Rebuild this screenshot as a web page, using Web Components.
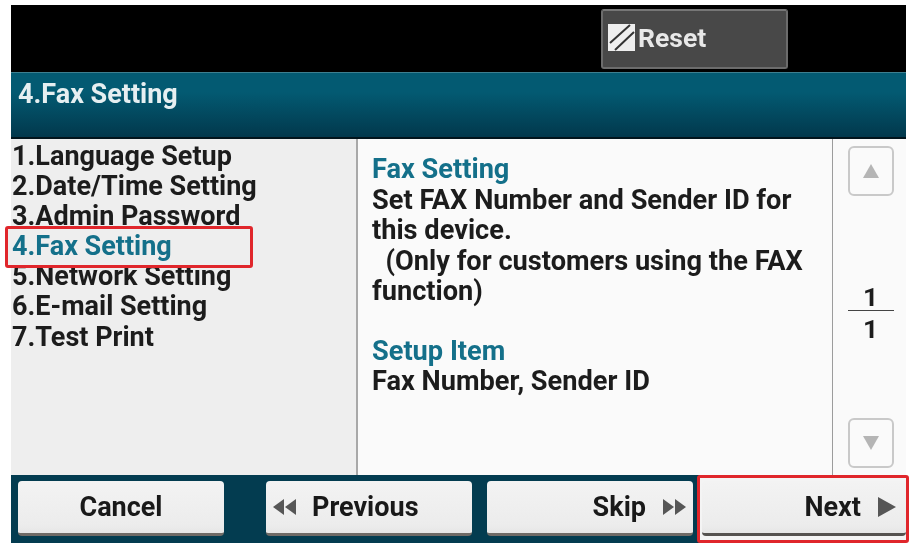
<!DOCTYPE html>
<html>
<head>
<meta charset="utf-8">
<title>Fax Setting</title>
<style>
  html, body { margin: 0; background: #fff; }
  body { width: 909px; height: 545px; overflow: hidden; font-family: Roboto, "Liberation Sans", sans-serif; }
</style>
</head>
<body>
<panel-screen></panel-screen>

<script>
class PanelButton extends HTMLElement {
  constructor() {
    super();
    this.attachShadow({ mode: "open" });
  }

  static get styles() {
    return /* css */`
      :host {
        display: flex;
        box-sizing: border-box;
        width: var(--btn-width, 206px);
        height: 55px;
        align-items: center;
        justify-content: var(--btn-justify, center);
        gap: var(--btn-gap, 0);
        padding: var(--btn-padding, 0);
        border-radius: 4px;
        background: linear-gradient(#f3f3f3, #ececec 85%, #e6e6e6);
        border-bottom: 3px solid #6f6a66;
        font-size: 27px;
        font-weight: 700;
        color: #191919;
      }
      svg { display: block; fill: #565656; }
    `;
  }

  connectedCallback() {
    const icons = {
      prev: `<svg width="24" height="18" viewBox="0 0 24 18"><path d="M0 9 11 1V17ZM12 9 23 1V17Z"/></svg>`,
      skip: `<svg width="24" height="18" viewBox="0 0 24 18"><path d="M1 1 12 9 1 17ZM13 1 24 9 13 17Z"/></svg>`,
      next: `<svg width="18" height="22" viewBox="0 0 18 22"><path d="M0 1 18 11 0 21Z"/></svg>`
    };
    const icon = icons[this.getAttribute("icon")] || "";
    const leading = this.getAttribute("icon") === "prev";
    this.shadowRoot.innerHTML = /* html */`
    <style>${PanelButton.styles}</style>
    ${leading ? icon : ""}<span><slot></slot></span>${leading ? "" : icon}`;
  }
}

class ResetButton extends HTMLElement {
  constructor() {
    super();
    this.attachShadow({ mode: "open" });
  }

  connectedCallback() {
    this.shadowRoot.innerHTML = /* html */`
    <style>
      :host {
        display: flex;
        box-sizing: border-box;
        width: 187px;
        height: 60px;
        align-items: center;
        gap: 3px;
        padding: 0 0 4px 5px;
        border-radius: 3px;
        border: 2px solid #6c6c6c;
        border-top-color: #777;
        background: #484848;
        color: #e8e8e8;
        font-size: 26.5px;
        font-weight: 700;
      }
      svg { display: block; }
    </style>
    <svg width="27" height="27" viewBox="0 0 27 27">
      <rect width="27" height="27" fill="#eee"/>
      <path d="M2 19 22 1M7 26 26 8" stroke="#333" stroke-width="2" fill="none"/>
    </svg>
    <span><slot></slot></span>`;
  }
}

class SetupList extends HTMLElement {
  constructor() {
    super();
    this.attachShadow({ mode: "open" });
  }

  connectedCallback() {
    const items = ["1.Language Setup", "2.Date/Time Setting", "3.Admin Password", "4.Fax Setting", "5.Network Setting", "6.E-mail Setting", "7.Test Print"];
    const rows = items.map((text, i) => `<div class="row${i === 3 ? " active" : ""}">${text}</div>`).join("");
    this.shadowRoot.innerHTML = /* html */`
    <style>
      :host {
        display: block;
        box-sizing: border-box;
        width: 347px;
        padding: 1.5px 0 0 1px;
        background: #eeeeee;
        border-right: 2px solid #a8a8a8;
      }
      .row {
        position: relative;
        height: 30.2px;
        line-height: 30.2px;
        font-size: 27px;
        font-weight: 700;
        color: #1c1c1c;
        white-space: nowrap;
      }
      .active { color: #14708a; z-index: 1; }
      .active::before {
        content: "";
        position: absolute;
        z-index: -1;
        left: -7px;
        top: -5px;
        width: 248px;
        height: 42px;
        box-sizing: border-box;
        border: 3px solid #e0262b;
        border-radius: 3px;
        background: #eeeeee;
      }
    </style>
    ${rows}`;
  }
}

class InfoPane extends HTMLElement {
  constructor() {
    super();
    this.attachShadow({ mode: "open" });
  }

  connectedCallback() {
    this.shadowRoot.innerHTML = /* html */`
    <style>
      :host {
        display: block;
        flex: 1;
        box-sizing: border-box;
        padding: 15px 0 0 14px;
        background: #fafafa;
        font-size: 27.2px;
        font-weight: 700;
        line-height: 30.5px;
        color: #1c1c1c;
      }
      h2 { margin: 0; font: inherit; color: #14708a; }
      p { margin: 0 0 29px; white-space: pre; }
    </style>
    <h2>Fax Setting</h2>
    <p>Set FAX Number and Sender ID for
this device.
  (Only for customers using the FAX
function)</p>
    <h2>Setup Item</h2>
    <p>Fax Number, Sender ID</p>`;
  }
}

class PageScroller extends HTMLElement {
  constructor() {
    super();
    this.attachShadow({ mode: "open" });
  }

  connectedCallback() {
    this.shadowRoot.innerHTML = /* html */`
    <style>
      :host {
        display: flex;
        box-sizing: border-box;
        width: 74px;
        flex-direction: column;
        align-items: center;
        justify-content: space-between;
        padding: 7px 0 7px 2px;
        background: #fafafa;
        border-left: 1px solid #9c9c9c;
      }
      .arrow {
        display: flex;
        box-sizing: border-box;
        width: 46px;
        height: 50px;
        align-items: center;
        justify-content: center;
        border: 2px solid #c9c9c9;
        border-radius: 6px;
        background: #fafafa;
      }
      svg { display: block; fill: #b5b5b5; }
      .count {
        width: 46px;
        font-size: 26.5px;
        font-weight: 700;
        line-height: 29px;
        text-align: center;
        color: #1c1c1c;
        margin-top: 9px;
      }
      .count div:first-child { border-bottom: 1.5px solid #444; padding-top: 4px; line-height: 26px; }
      .count div:last-child { padding-top: 3px; }
    </style>
    <div class="arrow"><svg width="16" height="14" viewBox="0 0 16 14"><path d="M8 0 16 14H0Z"/></svg></div>
    <div class="count"><div>1</div><div>1</div></div>
    <div class="arrow"><svg width="16" height="14" viewBox="0 0 16 14"><path d="M0 0H16L8 14Z"/></svg></div>`;
  }
}

class PanelScreen extends HTMLElement {
  constructor() {
    super();
    this.attachShadow({ mode: "open" });
  }

  static get styles() {
    return /* css */`
      :host {
        display: block;
        width: 909px;
        height: 545px;
        box-sizing: border-box;
        padding: 5px 3px 0 11px;
        filter: blur(0.45px);
      }
      .top {
        display: flex;
        height: 67px;
        box-sizing: border-box;
        padding: 4px 0 0 590px;
        background: #000;
      }
      .title {
        box-sizing: border-box;
        height: 67px;
        padding: 5px 0 0 7px;
        border-top: 1px solid #3d7f90;
        border-bottom: 2px solid #02141c;
        background: linear-gradient(#035a72, #035a72 30%, #02384c);
        color: #e6eff1;
        font-size: 27px;
        font-weight: 700;
        line-height: 32px;
      }
      .body {
        display: flex;
        height: 336px;
      }
      .footer {
        position: relative;
        display: flex;
        height: 68px;
        box-sizing: border-box;
        padding: 6px 0 0 7px;
        background: #033c50;
      }
      .previous { --btn-justify: flex-start; --btn-gap: 15px; --btn-padding: 0 0 0 7px; margin-left: 42px; }
      .skip { --btn-justify: flex-end; --btn-gap: 16px; --btn-padding: 0 7px 0 0; margin-left: 15px; }
      .next { --btn-width: 204px; --btn-justify: flex-end; --btn-gap: 17px; --btn-padding: 0 10px 0 0; margin-left: 9px; border-bottom-color: #55524f; position: relative; }
      .mark {
        position: absolute;
        left: 686px;
        top: 0;
        width: 212px;
        height: 68px;
        box-sizing: border-box;
        border: 3px solid #e0262b;
        border-radius: 3px;
      }
      .end {
        position: absolute;
        left: 689px;
        top: 2px;
        width: 206px;
        height: 64px;
        background: #f4f4f4;
      }
    `;
  }

  connectedCallback() {
    this.shadowRoot.innerHTML = /* html */`
    <style>${PanelScreen.styles}</style>
    <div class="top"><reset-button>Reset</reset-button></div>
    <div class="title">4.Fax Setting</div>
    <div class="body">
      <setup-list></setup-list>
      <info-pane></info-pane>
      <page-scroller></page-scroller>
    </div>
    <div class="footer">
      <div class="end"></div>
      <panel-button>Cancel</panel-button>
      <panel-button class="previous" icon="prev">Previous</panel-button>
      <panel-button class="skip" icon="skip">Skip</panel-button>
      <panel-button class="next" icon="next">Next</panel-button>
      <div class="mark"></div>
    </div>`;
  }
}

customElements.define("panel-button", PanelButton);
customElements.define("reset-button", ResetButton);
customElements.define("setup-list", SetupList);
customElements.define("info-pane", InfoPane);
customElements.define("page-scroller", PageScroller);
customElements.define("panel-screen", PanelScreen);
</script>
</body>
</html>
